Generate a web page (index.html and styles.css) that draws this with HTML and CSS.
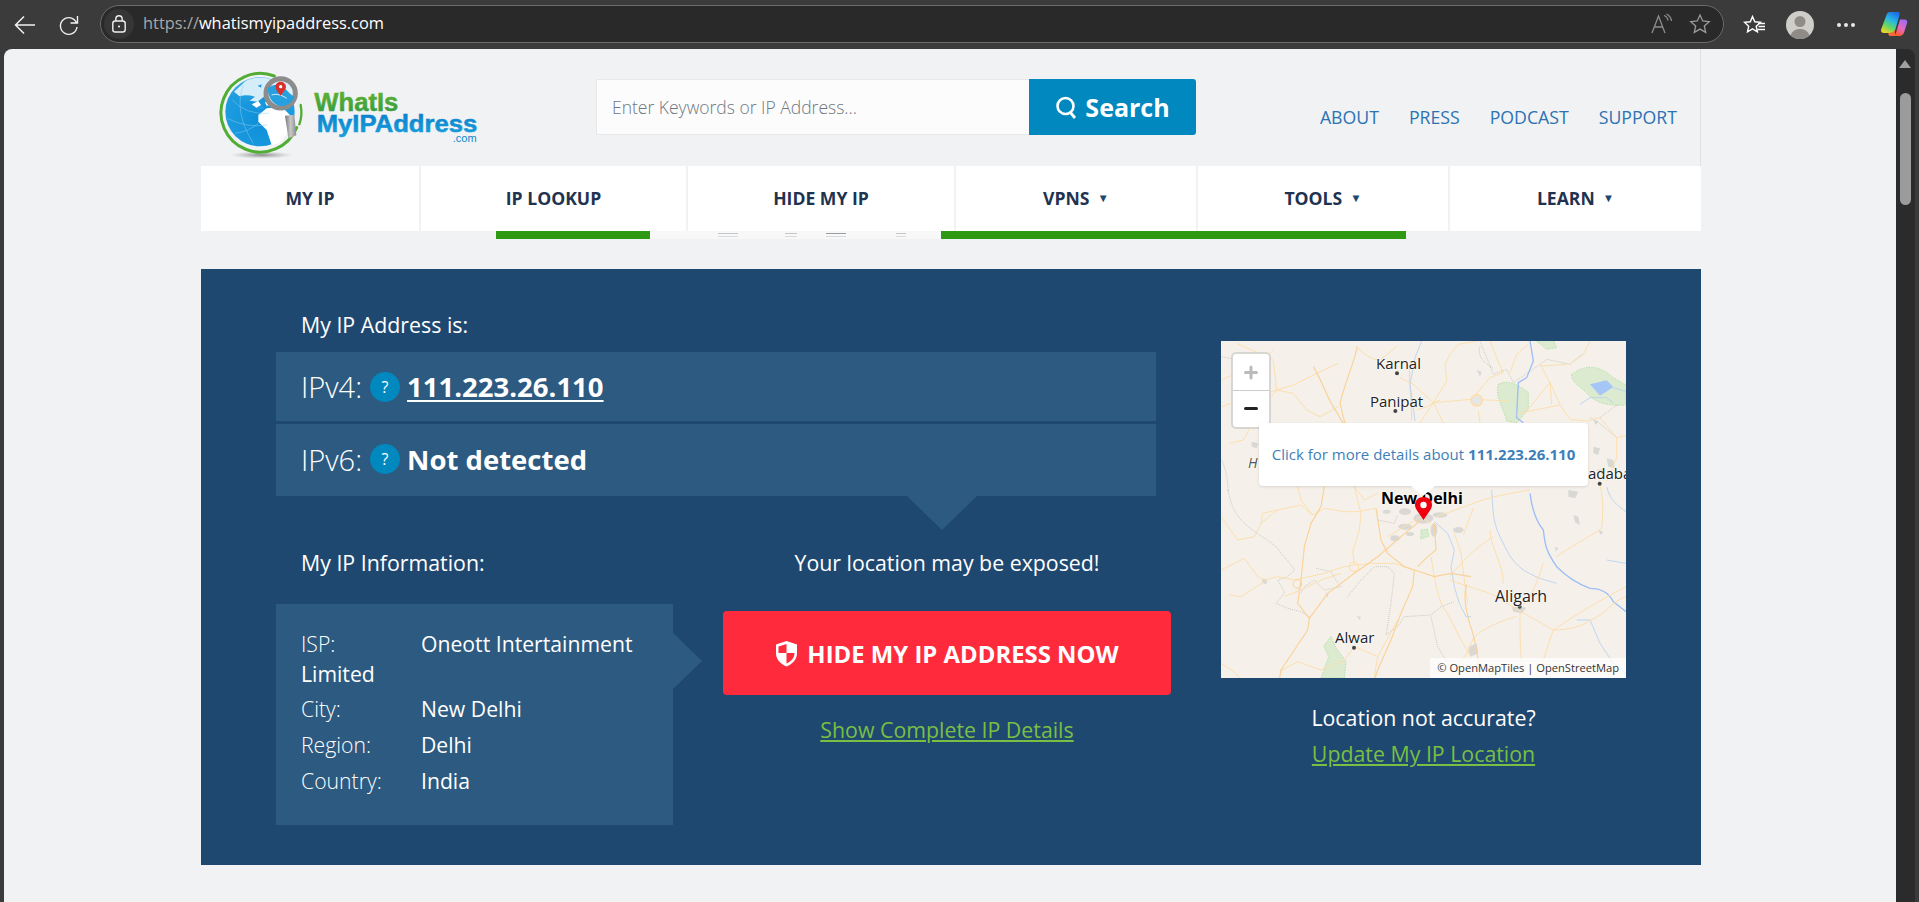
FILE: index.html
```html
<!DOCTYPE html>
<html>
<head>
    <title>What Is My IP Address</title>
    <link rel="stylesheet" href="styles.css">
</head>
<body>
    <div class="browser-bar">
        <svg class="bar-icon back" width="24" height="24" viewBox="0 0 24 24"><path d="M22 12H3M11 3.500 2.500 12l8.500 8.500" fill="none" stroke="#f2f2f2" stroke-width="1.500"/></svg>
        <svg class="bar-icon reload" width="24" height="24" viewBox="0 0 24 24"><path d="M19.500 10A8.300 8.300 0 1 0 20 14M20.500 3v7h-7" fill="none" stroke="#f2f2f2" stroke-width="1.400"/></svg>
        <div class="url-pill">
            <span class="lock-wrap">
                <svg width="18" height="20" viewBox="0 0 18 20"><rect x="2.800" y="7" width="12.400" height="11" rx="2.500" fill="none" stroke="#f0f0f0" stroke-width="1.400"/><path d="M5.800 7V5a3.200 3.200 0 0 1 6.400 0v2" fill="none" stroke="#f0f0f0" stroke-width="1.400"/><circle cx="9" cy="12.500" r="1.100" fill="#f0f0f0"/></svg>
            </span>
            <span class="url-text"><span class="url-scheme">https://</span>whatismyipaddress.com</span>
            <svg class="pill-icon" width="24" height="22" viewBox="0 0 24 22"><path d="M2 20 8.500 3l6.500 17M4.500 14h8" fill="none" stroke="#8d8d8d" stroke-width="1.300"/><path d="M14 2.500a6 6 0 0 1 4 5M16.500 1a9 9 0 0 1 5 7" fill="none" stroke="#8d8d8d" stroke-width="1.200"/></svg>
            <svg class="pill-icon star" width="22" height="22" viewBox="0 0 22 22"><path d="m11 2 2.700 6 6.500.7-4.900 4.300 1.400 6.400L11 16.100l-5.700 3.300 1.400-6.400-4.900-4.300 6.500-.7z" fill="none" stroke="#9a9a9a" stroke-width="1.300"/></svg>
        </div>
        <svg class="bar-icon favs" width="24" height="22" viewBox="0 0 24 22"><path d="m9.500 2.500 2.300 5.300 5.700.6-4.300 3.800 1.200 5.600-4.900-2.900-5 2.900 1.200-5.600L1.600 8.400l5.700-.6z" fill="none" stroke="#fff" stroke-width="1.400"/><path d="M15 9.500h7M15.500 12.500h6.500M14.500 15.500h7.500" stroke="#fff" stroke-width="1.300"/></svg>
        <svg class="bar-icon avatar" width="28" height="28" viewBox="0 0 28 28"><circle cx="14" cy="14" r="14" fill="#cfcdca"/><circle cx="14" cy="10.500" r="5.500" fill="#8f8b87"/><path d="M4.500 24.500C6 20 10 18 14 18s8 2 9.500 6.500A14 14 0 0 1 4.500 24.500z" fill="#8f8b87"/></svg>
        <span class="bar-dots"><i></i><i></i><i></i></span>
        <svg class="bar-icon copilot" width="28" height="28" viewBox="0 0 28 28">
            <defs>
                <linearGradient id="copA" x1=".7" y1="0" x2=".2" y2="1"><stop offset="0" stop-color="#1c6fe8"/><stop offset=".35" stop-color="#27b5e8"/><stop offset=".65" stop-color="#5fd66a"/><stop offset="1" stop-color="#f7d51e"/></linearGradient>
                <linearGradient id="copB" x1=".8" y1="0" x2=".3" y2="1"><stop offset="0" stop-color="#9a6cf2"/><stop offset=".55" stop-color="#e66ac4"/><stop offset="1" stop-color="#ff5a2c"/></linearGradient>
            </defs>
            <path d="M20 8.500h4.500c2 0 3.200 1.500 2.700 3.300L24 21.500c-.7 2.300-2.400 3.500-4.500 3.500H15z" fill="url(#copB)"/>
            <path d="M10 1h7.500c1.700 0 2.600 1.200 2.100 2.800L15.500 18c-.8 2.500-2.500 4-5 4H4c-2.200 0-3.500-1.700-2.800-3.800L6.500 4C7.200 2 8.300 1 10 1z" fill="url(#copA)"/>
            <path d="M15.500 18c-1 3-1 5 1 7h-6c-2 0-2.500-1.500-2-3 3 0 5.500-1 7-4z" fill="#ff6a3a"/>
        </svg>
    </div>

    <div class="viewport">
        <div class="page">
            <div class="site">
                <header class="site-header">
                    <svg class="logo" width="270" height="100" viewBox="0 0 810 300">
                        <defs>
                            <radialGradient id="globeFill" cx=".5" cy=".65" r=".75"><stop offset="0" stop-color="#0d8fd9"/><stop offset=".75" stop-color="#1f9de0"/><stop offset="1" stop-color="#8fd0f0"/></radialGradient>
                            <radialGradient id="logoShadow"><stop offset="0" stop-color="#666" stop-opacity=".75"/><stop offset="1" stop-color="#999" stop-opacity="0"/></radialGradient>
                            <linearGradient id="handleFill" x1="0" y1="0" x2="1" y2="0"><stop offset="0" stop-color="#777"/><stop offset=".5" stop-color="#c9c9c9"/><stop offset="1" stop-color="#8a8a8a"/></linearGradient>
                            <linearGradient id="whatFill" x1="0" y1="0" x2="0" y2="1"><stop offset="0" stop-color="#6cb52c"/><stop offset="1" stop-color="#2c9a45"/></linearGradient>
                            <linearGradient id="addrFill" x1="0" y1="0" x2="0" y2="1"><stop offset="0" stop-color="#0a7ec9"/><stop offset="1" stop-color="#18a0dc"/></linearGradient>
                        </defs>
                        <ellipse cx="140" cy="270" rx="95" ry="11" fill="url(#logoShadow)"/>
                        <circle cx="135" cy="140" r="104" fill="url(#globeFill)"/>
                        <path d="M92 48c25-14 60-14 85 0l-20 40-30 22-40-5-30-25z" fill="#d5edf9"/>
                        <path d="M60 100c20-12 40-10 60-5l-20 15zM118 122l20-6 10 14-18 4zM128 62l12-4-2 10z" fill="#1f9de0"/>
                        <path d="M130 150l25-20 45-5 25 25-3 50-30 35-22 5-15-45-25-25z" fill="#fff"/>
                        <path d="M110 118l20-10 8 12-14 8zM150 112l25-8 5 12-25 6z" fill="#fff"/>
                        <path d="M52 105q40 45 110 40M36 160q60 30 120 20M85 60q-30 80 30 175M60 205q40-5 70-30" fill="none" stroke="#8bcdee" stroke-width="1.500"/>
                        <path d="M178 33A118 118 0 1 0 245 188" fill="none" stroke="#52ad35" stroke-width="9" stroke-linecap="round"/>
                        <path d="M257 120q6 30-4 58" fill="none" stroke="#52ad35" stroke-width="7" stroke-linecap="round"/>
                        <circle cx="197" cy="85" r="44" fill="#dff0fa" stroke="#8c8c8c" stroke-width="15"/>
                        <path d="M158 70c15-12 30-15 45-5 15 12 25 25 35 30-5 15-20 28-40 28-20-2-38-20-40-53z" fill="#27a0e0"/>
                        <path d="M170 90c15-5 30 0 45 10" fill="none" stroke="#fff" stroke-width="2.500"/>
                        <path d="M197 50c-10 0-16 8-16 15 0 9 11 18 16 28 5-10 16-19 16-28 0-7-6-15-16-15z" fill="#d9322c"/>
                        <circle cx="197" cy="65" r="5" fill="#fff"/>
                        <path d="M210 152l28-3 6 62-24 9z" fill="url(#handleFill)"/>
                        <text class="logo-what" x="298" y="137" textLength="252" lengthAdjust="spacingAndGlyphs">WhatIs</text>
                        <text class="logo-addr" x="305" y="200" textLength="482" lengthAdjust="spacingAndGlyphs">MyIPAddress</text>
                        <text class="logo-com" x="785" y="232" text-anchor="end">.com</text>
                    </svg>
                    <form class="search">
                        <input class="search-input" type="text" placeholder="Enter Keywords or IP Address...">
                        <button class="search-btn" type="button">
                            <svg width="23" height="23" viewBox="0 0 23 23"><circle cx="10.500" cy="10" r="8" fill="none" stroke="#fff" stroke-width="2.600"/><path d="m15 16 5 6" stroke="#fff" stroke-width="2.800"/></svg>
                            Search
                        </button>
                    </form>
                    <nav class="top-links">
                        <a>ABOUT</a>
                        <a>PRESS</a>
                        <a>PODCAST</a>
                        <a>SUPPORT</a>
                    </nav>
                </header>

                <nav class="main-nav">
                    <a>MY IP</a>
                    <a>IP LOOKUP</a>
                    <a>HIDE MY IP</a>
                    <a>VPNS <i class="caret">&#9660;</i></a>
                    <a>TOOLS <i class="caret">&#9660;</i></a>
                    <a>LEARN <i class="caret">&#9660;</i></a>
                </nav>

                <div class="promo-strip">
                    <div class="promo-green promo-left"></div>
                    <div class="promo-thumb">
                        <i class="scrap s1"></i><i class="scrap s2"></i><i class="scrap s3"></i><i class="scrap s4"></i>
                    </div>
                    <div class="promo-green promo-right"></div>
                </div>

                <section class="hero">
                    <div class="hero-main">
                        <h2 class="hero-label first">My IP Address is:</h2>
                        <div class="ip-row">
                            <span class="ip-name">IPv4:</span>
                            <span class="help">?</span>
                            <a class="ip-value linked">111.223.26.110</a>
                        </div>
                        <div class="ip-row second">
                            <span class="ip-name">IPv6:</span>
                            <span class="help">?</span>
                            <span class="ip-value">Not detected</span>
                        </div>
                        <div class="hero-lower">
                            <div class="info-col">
                                <h2 class="hero-label">My IP Information:</h2>
                                <div class="info-box">
                                    <p class="info-line isp"><span class="info-key">ISP:</span>Oneott Intertainment Limited</p>
                                    <p class="info-line"><span class="info-key">City:</span>New Delhi</p>
                                    <p class="info-line"><span class="info-key">Region:</span>Delhi</p>
                                    <p class="info-line"><span class="info-key">Country:</span>India</p>
                                </div>
                            </div>
                            <div class="cta-col">
                                <p class="exposed">Your location may be exposed!</p>
                                <a class="hide-btn">
                                    <svg width="23" height="27" viewBox="0 0 23 27"><path d="M11.500 1 22 4.500V13c0 6.500-4.500 11-10.500 13.500C5.500 24 1 19.500 1 13V4.500z" fill="#fff"/><path d="M11.500 4 3.500 6.500V13h8zM11.500 13v10.500c4.500-2 8-5.500 8-10.500z" fill="#ff2b3c"/></svg>
                                    HIDE MY IP ADDRESS NOW
                                </a>
                                <a class="green-link details">Show Complete IP Details</a>
                            </div>
                        </div>
                    </div>

                    <div class="hero-side">
                        <div class="map">
                            <svg class="map-art" width="405" height="337" viewBox="33 33 1215 1011">
                                <rect x="33" y="33" width="1215" height="1011" fill="#f5f1ea"/>

                                <!-- parks and water -->
                                <g fill="#dcebd0" stroke="#8fd98a" stroke-width="2" stroke-dasharray="4 4">
                                    <path d="M1085 133c40-30 80-30 125 10l38 22v60c-50 3-90-3-120-38-20-20-45-30-43-54z"/>
                                    <path d="M865 163c25-15 60 0 90 25v50l-35 40-30-5c-10-40-35-70-25-110z"/>
                                    <path d="M363 920l-22 28 15 32-23 64h70l5-50-30-40z"/>
                                    <path d="M980 33l30 25 30-5-10-25z"/>
                                    <path d="M633 600l20-3 3 22-24 8z"/>
                                </g>
                                <path d="M1140 163l50-12 20 20-40 26z" fill="#a5c6f6"/>

                                <!-- built up areas -->
                                <g fill="#d9d8d4">
                                    <ellipse cx="640" cy="565" rx="30" ry="16"/>
                                    <ellipse cx="585" cy="545" rx="18" ry="10"/>
                                    <ellipse cx="690" cy="555" rx="22" ry="8"/>
                                    <ellipse cx="745" cy="600" rx="16" ry="9"/>
                                    <ellipse cx="585" cy="590" rx="20" ry="9"/>
                                    <ellipse cx="555" cy="625" rx="14" ry="9"/>
                                    <ellipse cx="600" cy="612" rx="12" ry="6"/>
                                    <ellipse cx="672" cy="600" rx="10" ry="20"/>
                                    <ellipse cx="530" cy="545" rx="12" ry="6"/>
                                    <path d="M1075 480l30 5-10 20-20-5z"/>
                                    <path d="M1150 350l20 5-5 20-15-5zM1190 385l20 5 5 25-20-5zM1160 420l25-5-5 20z"/>
                                    <path d="M775 950l25-10 5 30-25 10z"/>
                                    <path d="M905 830l45 2-15 18-25-5z"/>
                                    <path d="M125 335l20 5-5 15-15-5z"/>
                                    <path d="M158 745l14 4-4 14-12-5zM345 790l10 3-3 10zM440 858l12 2-2 10z"/>
                                    <path d="M1090 555l15 5 5 25-15-8zM1165 600l15 5-8 10zM1035 650l10 5-8 10z"/>
                                    <path d="M800 120l15 5-5 15zM1150 270l15 5-8 10z"/>
                                </g>

                                <!-- district lines -->
                                <g fill="none" stroke="#b5b3ad" stroke-width="2" stroke-dasharray="3 3">
                                    <path d="M35 80c50 10 90 20 130 15M35 390c20 40 20 110 20 90"/>
                                    <g transform="translate(33 450)">
                                        <path d="M20 30c10 30 10 60 50 100 40 35 60 40 100 75 20 30 40 45 50 65-10 15-30 25-50 30 10 20 20 30 20 40l-25 30 35 15 40 10 25 15"/>
                                        <path d="M285 265l45 10 15 25 15 20-50 10-30-30-30 20-10 20"/>
                                        <path d="M380 350l40-50 40-40h40l20 20-10 90-15 95 35-25 20-30 80-5 30-25 40-15"/>
                                        <path d="M630 410l20 90 30 50M470 120l50 10 10-25"/>
                                    </g>
                                    <g transform="translate(570 33)">
                                        <path d="M240 0l20 50 20 50 40-15 20 40 80-55 20-15 70 15 35-30M600 230l40-30 15-10M570 230l20 10 60 50"/>
                                    </g>
                                    <path d="M810 50c-10 30 15 50 40 65M600 100c-5 50 5 110 5 170"/>
                                </g>

                                <!-- rivers -->
                                <g fill="none" stroke="#b3cff2" stroke-width="2.500">
                                    <g transform="translate(33 450)"><path d="M640 125l40 35 20 50-10 50 10 60 15 50 20 40h15"/></g>
                                    <g transform="translate(570 33)"><path d="M65 0l-20 50-15 80 15 110M640 140l50 15M540 190l30-20h50l20 15"/></g>
                                    <path d="M845 480c5 50 0 90 25 140 20 40 30 70 70 100 50 30 70 30 100 40M1100 870l40 0 30 70 40 60 38 30M1190 470c10 40 30 55 58 75M1190 690l58 10"/>
                                </g>
                                <g fill="none" stroke="#9dbdf6" stroke-width="4">
                                    <g transform="translate(570 33)"><path d="M390 0l10 60-20 50-25 15-3 55-2 50 20 15"/></g>
                                    <path d="M960 490c5 40 15 80 40 110 5 40 5 60 40 110 30 30 60 50 100 65 40 0 60 20 70 40l38 30"/>
                                </g>

                                <!-- roads -->
                                <g fill="none" stroke="#fcdfae" stroke-width="3">
                                    <path d="M80 40l110 50 10 90 50 10 40 50 40 20 55-30M385 100l-65 30-70 35-50 15-50 60-50 90-40 10"/>
                                    <path d="M190 60c-30 30-70 50-155 90M35 230c50-20 100-30 165-50"/>
                                    <path d="M440 50c30 30 50 40 70 40l50-40M620 240l30-10 40-20"/>
                                    <g transform="translate(33 450)">
                                        <path d="M0 110l50 70 50-10 20-40 50-40 70-15 35 30 35-20 60 10 40 0 55-10"/>
                                        <path d="M230 20l10 40 35 45M120 130l5-30 45-10"/>
                                        <path d="M0 270l70-35 40 55 20 10 40-10 50 10 90-20 60-20 30-5 60-5 60 0 60 20"/>
                                        <path d="M25 345l35 5 70-45M190 350l50-20 60-30 60-20"/>
                                        <path d="M400 255l-5-40 20-65 5-50-20-80M400 20l30 40 40-20"/>
                                        <path d="M630 230l15 90 15 50 30 50 30 60 30 50M700 160l20 60 10 80 10 70"/>
                                        <path d="M400 500l70 30-10 60M400 500l-30 40-70 30-70-25-55 30M470 530l60-110M0 550l40 25 20 25"/>
                                        <path d="M630 130l-30-20-100 60"/>
                                    </g>
                                    <g transform="translate(570 33)">
                                        <path d="M100 185l115-10 115 5M100 185l-40 60M100 185l40-65-5-50 15-30 25-30 55-10M100 185l30 60M100 185L40 130 0 110"/>
                                        <path d="M215 175l55-65 40-15-20-45-20-50M330 95l20-55 40-35"/>
                                        <path d="M380 210l70-85 30 65M450 125l5 65M350 220l30-8 100-20 30 43 50 5 40-10 50 60 0 60-30 70"/>
                                        <path d="M450 125l-30-55 5 5 75-5M510 70l40-30 20-40M240 245l-5-35M650 290l40-10"/>
                                    </g>
                                    <path d="M720 750c50 20 100 30 140 50 60 40 120 70 170 100 60-40 130-85 218-130"/>
                                    <path d="M1040 680c40-30 100-60 135-85 5-50 5-90-5-130M1000 700c-20 60-30 90-60 125"/>
                                    <path d="M930 850c0 60 0 130 10 194M1030 900c-20 50-30 100-50 144M1030 900c40 0 90-10 110-30 40-10 70-60 108-70"/>
                                    <path d="M850 620c-50 30-100 80-130 120M840 600c0 50 40 100 40 160M790 535l-30 80"/>
                                    <path d="M960 480c-60 10-120 20-170 40l-110 40M720 1044c20-30 50-60 70-120 30-30 80-50 130-65"/>
                                </g>
                                <g fill="none" stroke="#fad29a" stroke-width="3.500">
                                    <path d="M442 50c-10 50-35 100-52 170l15 60M310 110c30 50 40 90 60 120l30 50"/>
                                    <g transform="translate(33 450)">
                                        <path d="M310 20l-10 60-30 50-20 70-10 100-10 70 35 45-5 35-40 60-40 60-5 30"/>
                                        <path d="M265 415l55-75 80-60 70-50 70-60 60-50"/>
                                        <path d="M465 85l15 95 20 40 50 40 30 10 60 20 50-10 60 10"/>
                                        <path d="M580 270l-5 50-35 80-30 80-40 90-10 30"/>
                                        <path d="M640 130l5 80-25 20-30 30"/>
                                    </g>
                                    <path d="M810 1044c-5-60-15-120-30-160-15-50-20-90-10-120"/>
                                </g>
                                <circle cx="800" cy="211" r="17" fill="#e8e6e2" stroke="#fcdfae" stroke-width="5"/>
                                <circle cx="262" cy="762" r="13" fill="none" stroke="#fad29a" stroke-width="3"/>
                                <circle cx="432" cy="710" r="14" fill="none" stroke="#fcdfae" stroke-width="3.500"/>

                                <g fill="#444">
                                    <circle cx="561" cy="130" r="6"/>
                                    <circle cx="556" cy="243" r="6"/>
                                    <circle cx="1169" cy="461" r="6"/>
                                    <circle cx="929" cy="830" r="6"/>
                                    <circle cx="432" cy="953" r="6"/>
                                </g>
                            </svg>

                            <span class="place karnal">Karnal</span>
                            <span class="place panipat">Panipat</span>
                            <span class="place hisar">H</span>
                            <span class="place mora">adaba</span>
                            <span class="place delhi">New Delhi</span>
                            <span class="place aligarh">Aligarh</span>
                            <span class="place alwar">Alwar</span>

                            <div class="zoom-ctrl">
                                <span class="zoom-btn plus"><i></i><i></i></span>
                                <span class="zoom-btn minus"><i></i></span>
                            </div>

                            <div class="popup"><span>Click for more details about <b>111.223.26.110</b></span></div>

                            <svg class="pin" width="17" height="23" viewBox="0 0 17 23"><path d="M8.500 0C3.500 0 0 3.500 0 8c0 4.500 5 9 8.500 15C12 17 17 12.500 17 8c0-4.500-3.500-8-8.500-8z" fill="#f0000f"/><circle cx="8.500" cy="8" r="3.200" fill="#fff"/></svg>

                            <div class="attribution">© OpenMapTiles | OpenStreetMap</div>
                        </div>
                        <p class="map-note">Location not accurate?</p>
                        <a class="green-link update">Update My IP Location</a>
                    </div>
                </section>
            </div>
        </div>
        <div class="scrollbar">
            <i class="scroll-up"></i>
            <i class="scroll-thumb"></i>
        </div>
    </div>
</body>
</html>
```

FILE: styles.css
```css
html, body {
    height: 100%;
    margin: 0;
}
body {
    background-color: #3b3b3b;
    font-family: "Open Sans", "Noto Sans", sans-serif;
    overflow: hidden;
    display: flex;
    flex-direction: column;
}
a {
    cursor: pointer;
}

/* browser toolbar */
.browser-bar {
    height: 49px;
    flex: none;
    display: flex;
    align-items: center;
}
.bar-icon {
    flex: none;
}
.back {
    margin-left: 13px;
}
.reload {
    margin-left: 20px;
}
.url-pill {
    flex: none;
    margin-left: 19px;
    width: 1624px;
    height: 38px;
    box-sizing: border-box;
    border: 1px solid #6a6a6a;
    border-radius: 19px;
    background-color: #292929;
    display: flex;
    align-items: center;
    margin-top: -1px;
}
.lock-wrap {
    width: 30px;
    height: 30px;
    margin-left: 3px;
    border-radius: 15px;
    background-color: #363636;
    display: flex;
    align-items: center;
    justify-content: center;
}
.url-text {
    margin-left: 9px;
    font-size: 16.4px;
    line-height: 22px;
    padding-bottom: 2px;
    color: #fff;
    flex: 1;
}
.url-scheme {
    color: #a8a8a8;
}
.pill-icon {
    flex: none;
}
.star {
    margin-left: 15px;
    margin-right: 12px;
}
.favs {
    margin-left: 19px;
}
.avatar {
    margin-left: 19px;
}
.bar-dots {
    margin-left: 23px;
    display: flex;
    gap: 3px;
}
.bar-dots i {
    width: 4px;
    height: 4px;
    border-radius: 2px;
    background-color: #e8e8e8;
}
.copilot {
    margin-left: 25px;
}

/* page area */
.viewport {
    flex: 1;
    display: flex;
    margin-left: 4px;
    min-height: 0;
}
.page {
    width: 1892px;
    background-color: #f1f2f4;
    border-radius: 8px 0 0 0;
    overflow: hidden;
    padding-left: 197px;
    box-sizing: border-box;
}
.site {
    width: 1500px;
}
.scrollbar {
    width: 19px;
    background-color: #2b2b2b;
    border-radius: 0 8px 0 0;
    position: relative;
}
.scroll-up {
    position: absolute;
    left: 3px;
    top: 11px;
    width: 0;
    height: 0;
    border-left: 6px solid transparent;
    border-right: 6px solid transparent;
    border-bottom: 8px solid #a0a0a0;
}
.scroll-thumb {
    position: absolute;
    left: 4px;
    top: 44px;
    width: 11px;
    height: 112px;
    border-radius: 6px;
    background-color: #9b9b9b;
}

/* site header */
.site-header {
    height: 117px;
    display: flex;
    border-right: 1px solid #dde1e6;
}
.logo {
    flex: none;
    margin: 16px 0 0 14px;
}
.logo-what {
    font-family: "Liberation Sans", sans-serif;
    font-weight: bold;
    font-size: 80px;
    fill: url(#whatFill);
    stroke: url(#whatFill);
    stroke-width: 1.500px;
}
.logo-addr {
    font-family: "Liberation Sans", sans-serif;
    font-weight: bold;
    font-size: 70px;
    fill: url(#addrFill);
    stroke: url(#addrFill);
    stroke-width: 1.500px;
}
.logo-com {
    font-family: "Liberation Sans", sans-serif;
    font-size: 33px;
    fill: #0d87cc;
}
.search {
    flex: none;
    display: flex;
    margin: 30px 0 0 111px;
    height: 56px;
}
.search-input {
    width: 433px;
    box-sizing: border-box;
    padding: 0 15px;
    border: 1px solid #e7e8ea;
    border-right: none;
    background-color: #fcfcfc;
    font-family: "Open Sans", sans-serif;
    font-weight: 300;
    font-size: 17.5px;
    outline: none;
}
.search-input::placeholder {
    color: #6f7780;
    opacity: 1;
}
.search-btn {
    width: 167px;
    border: none;
    border-radius: 0 3px 3px 0;
    background-color: #0088bf;
    color: #fff;
    font-family: "Open Sans", sans-serif;
    font-weight: 700;
    font-size: 25px;
    display: flex;
    align-items: center;
    justify-content: center;
    gap: 7px;
    padding: 0;
}
.top-links {
    margin-left: auto;
    padding: 56px 23px 0 0;
    display: flex;
    gap: 30px;
    font-size: 17.7px;
    line-height: 24px;
    color: #2b73b3;
}

/* main navigation */
.main-nav {
    height: 65px;
    display: grid;
    grid-template-columns: 218px 265px 266px 240px 250px 251px;
    column-gap: 2px;
    width: 1500px;
}
.main-nav a {
    background-color: #fff;
    display: flex;
    align-items: center;
    justify-content: center;
    gap: 8px;
    font-weight: 700;
    font-size: 17.6px;
    color: #1f3350;
    padding-bottom: 2px;
}
.caret {
    font-style: normal;
    font-size: 11.5px;
    color: #1f4871;
}

/* promo strip under the nav */
.promo-strip {
    height: 8px;
    margin-left: 295px;
    display: flex;
}
.promo-green {
    background-color: #2e9a13;
}
.promo-left {
    width: 154px;
}
.promo-right {
    width: 465px;
}
.promo-thumb {
    width: 291px;
    background-color: #f7f8f7;
    position: relative;
    overflow: hidden;
}
.scrap {
    position: absolute;
    top: 2px;
    height: 1px;
    background-color: #c4c7c9;
    box-shadow: 0 3px 0 #d8dadb;
}
.s1 {
    left: 68px;
    width: 20px;
}
.s2 {
    left: 135px;
    width: 12px;
}
.s3 {
    left: 176px;
    width: 20px;
    background-color: #9a9ea2;
}
.s4 {
    left: 246px;
    width: 10px;
}

/* hero */
.hero {
    margin-top: 30px;
    height: 596px;
    background-color: #1f4871;
    display: flex;
    color: #fff;
    padding-left: 75px;
}
.hero-main {
    width: 895px;
    flex: none;
}
.hero-label {
    margin: 0;
    font-weight: 400;
    font-size: 21.33px;
    line-height: 28px;
    padding-left: 25px;
}
.hero-label.first {
    padding-top: 42px;
    height: 41px;
}
.ip-row {
    width: 880px;
    height: 69px;
    background-color: #2d5a80;
    display: flex;
    align-items: center;
    padding-left: 25px;
    box-sizing: border-box;
    font-size: 27.5px;
}
.ip-row.second {
    margin-top: 3px;
    height: 72px;
    padding-bottom: 2px;
    position: relative;
}
.ip-row.second::after {
    content: "";
    position: absolute;
    left: 631px;
    top: 100%;
    border-left: 35px solid transparent;
    border-right: 35px solid transparent;
    border-top: 34px solid #2d5a80;
}
.ip-name {
    font-weight: 300;
    font-size: 29px;
}
.help {
    width: 30px;
    height: 30px;
    margin: 0 7px 0 8px;
    border-radius: 15px;
    background-color: #0088bf;
    font-size: 16px;
    font-weight: 400;
    display: flex;
    align-items: center;
    justify-content: center;
}
.ip-value {
    font-weight: 700;
}
.linked {
    text-decoration: underline;
    text-decoration-thickness: 2px;
    text-underline-offset: 3px;
}
.hero-lower {
    display: flex;
    margin-top: 53px;
}
.info-col {
    width: 447px;
    flex: none;
}
.info-box {
    margin-top: 27px;
    width: 397px;
    height: 221px;
    box-sizing: border-box;
    background-color: #2d5a80;
    padding: 25px 25px 0;
    position: relative;
}
.info-box::after {
    content: "";
    position: absolute;
    left: 100%;
    top: 29px;
    border-top: 28px solid transparent;
    border-bottom: 28px solid transparent;
    border-left: 29px solid #2d5a80;
}
.info-line {
    margin: 0 0 6px;
    font-size: 21.2px;
    line-height: 30px;
}
.info-line.isp {
    margin-bottom: 5px;
}
.info-key {
    display: inline-block;
    width: 120px;
    font-weight: 300;
}
.cta-col {
    width: 448px;
    display: flex;
    flex-direction: column;
    align-items: center;
}
.exposed {
    margin: 0;
    font-size: 21.33px;
    line-height: 28px;
}
.hide-btn {
    margin-top: 34px;
    width: 448px;
    height: 84px;
    border-radius: 4px;
    background-color: #ff2b3c;
    display: flex;
    align-items: center;
    justify-content: center;
    gap: 9px;
    font-weight: 700;
    font-size: 23.9px;
}
.green-link {
    color: #79bf44;
    font-size: 21.33px;
    line-height: 28px;
    text-decoration: underline;
}
.details {
    margin-top: 21px;
}

/* map column */
.hero-side {
    margin-left: 50px;
    width: 405px;
    flex: none;
    padding-top: 72px;
    display: flex;
    flex-direction: column;
    align-items: center;
}
.map {
    width: 405px;
    height: 337px;
    position: relative;
    overflow: hidden;
}
.map-art {
    display: block;
}
.place {
    position: absolute;
    font-size: 15px;
    line-height: 20px;
    color: #222;
    white-space: nowrap;
    text-shadow: 0 0 2px #fff, 0 0 2px #fff;
}
.karnal {
    left: 155px;
    top: 12px;
}
.panipat {
    left: 149px;
    top: 50px;
}
.hisar {
    left: 27px;
    top: 112px;
    font-style: italic;
    color: #555;
    font-size: 14px;
}
.mora {
    left: 367px;
    top: 122px;
}
.delhi {
    left: 160px;
    top: 147px;
    font-weight: 700;
    font-size: 16px;
    color: #000;
}
.aligarh {
    left: 274px;
    top: 245px;
    font-size: 16px;
}
.alwar {
    left: 114px;
    top: 286px;
}
.zoom-ctrl {
    position: absolute;
    left: 10px;
    top: 11px;
    width: 36px;
    border: 2px solid #d8d6d2;
    border-radius: 5px;
    background-color: #fff;
}
.zoom-btn {
    display: block;
    height: 36px;
    position: relative;
}
.plus {
    border-bottom: 1px solid #ccc;
}
.zoom-btn i {
    position: absolute;
    left: 11px;
    top: 17px;
    width: 14px;
    height: 3px;
    border-radius: 2px;
    background-color: #bbb;
}
.plus i:last-child {
    transform: rotate(90deg);
}
.minus i {
    background-color: #222;
    top: 16px;
}
.popup {
    position: absolute;
    left: 38px;
    top: 82px;
    width: 329px;
    height: 63px;
    box-sizing: border-box;
    border-radius: 4px;
    background-color: #fff;
    color: #3e7fb9;
    font-size: 15px;
    display: flex;
    align-items: center;
    justify-content: center;
    padding-bottom: 2px;
    box-shadow: 0 1px 3px rgba(0, 0, 0, 0.12);
}
.popup::after {
    content: "";
    position: absolute;
    left: 152px;
    top: 100%;
    border-left: 12px solid transparent;
    border-right: 12px solid transparent;
    border-top: 10px solid #fff;
}
.pin {
    position: absolute;
    left: 194px;
    top: 156px;
}
.attribution {
    position: absolute;
    right: 0;
    bottom: 0;
    padding: 0 7px;
    height: 20px;
    line-height: 20px;
    font-size: 11.15px;
    color: #333;
    background-color: rgba(255, 255, 255, 0.7);
}
.map-note {
    margin: 26px 0 0;
    font-size: 21.33px;
    line-height: 28px;
}
.update {
    margin-top: 8px;
}
```
